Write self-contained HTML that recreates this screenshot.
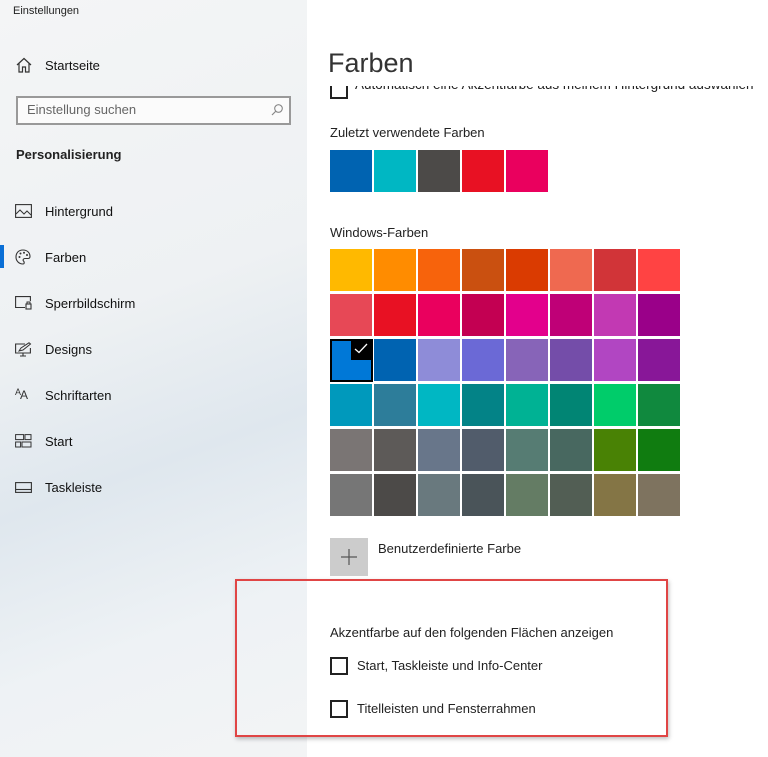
<!DOCTYPE html>
<html><head><meta charset="utf-8"><style>
*{margin:0;padding:0;box-sizing:border-box}
body{width:768px;height:757px;position:relative;overflow:hidden;background:#fff;font-family:"Liberation Sans",sans-serif;color:#000}
.side{position:absolute;left:0;top:0;width:307px;height:757px;background:linear-gradient(160deg,#f4f5f6 0%,#eef1f3 40%,#dfe7ee 60%,#eef2f5 80%,#f3f4f5 100%)}
.t{position:absolute;white-space:nowrap}
.nav{position:absolute;left:45px;font-size:13px;color:#111}
.ic{position:absolute;left:15px}
.sw{position:absolute;width:42px;height:42px}
.cb{position:absolute;width:18px;height:18px;border:2px solid #222;background:#fff}
</style></head><body>
<div class="side"></div>
<div class="t" style="left:13px;top:5px;font-size:11px;color:#222">Einstellungen</div>
<svg class="ic" style="top:57px" width="18" height="16" viewBox="0 0 18 16"><path d="M2 8 L9 1.5 L16 8 M4 6.5 V15 H7.5 V10 H10.5 V15 H14 V6.5" fill="none" stroke="#333" stroke-width="1.2"/></svg>
<div class="nav" style="top:58px">Startseite</div>
<div style="position:absolute;left:16px;top:96px;width:275px;height:29px;border:2px solid #999;background:#fbfbfb"></div>
<div class="t" style="left:27px;top:102px;font-size:13px;color:#666">Einstellung suchen</div>
<svg style="position:absolute;left:270px;top:103px" width="14" height="14" viewBox="0 0 14 14"><circle cx="8.5" cy="5.5" r="3.8" fill="none" stroke="#888" stroke-width="1.1"/><path d="M6 8 L2 12" stroke="#888" stroke-width="1.2"/></svg>
<div class="t" style="left:16px;top:147px;font-size:13px;font-weight:bold;color:#222">Personalisierung</div>
<svg class="ic" style="top:204px" width="17" height="14" viewBox="0 0 17 14"><rect x="0.6" y="0.6" width="15.8" height="12.8" fill="none" stroke="#333" stroke-width="1.1"/><path d="M1 10 L5 6 L9 10 L12 7 L16 11" fill="none" stroke="#333" stroke-width="1"/></svg>
<div class="nav" style="top:204px">Hintergrund</div>
<div style="position:absolute;left:0;top:245px;width:4px;height:23px;background:#0a6fd6"></div>
<svg class="ic" style="top:249px" width="16" height="16" viewBox="0 0 16 16"><path d="M8 1 C3 1 1 4.5 1 8 C1 12 4 15 8 15 C9.5 15 9.5 13 8.5 12 C7.5 11 8.5 9.5 10 9.5 H13 C14.5 9.5 15 8.5 15 7.5 C15 3.5 12 1 8 1Z" fill="none" stroke="#333" stroke-width="1.1"/><circle cx="4.5" cy="8" r="1" fill="#333"/><circle cx="5.5" cy="4.5" r="1" fill="#333"/><circle cx="9" cy="3.8" r="1" fill="#333"/><circle cx="12" cy="6" r="1" fill="#333"/></svg>
<div class="nav" style="top:250px">Farben</div>
<svg class="ic" style="top:296px" width="17" height="14" viewBox="0 0 17 14"><path d="M10 11.5 H0.6 V0.6 H15.4 V5" fill="none" stroke="#333" stroke-width="1.1"/><rect x="11" y="8" width="5" height="5" fill="none" stroke="#333" stroke-width="1.1"/><path d="M12 8 V6 H15 V8" fill="none" stroke="#333"/></svg>
<div class="nav" style="top:296px">Sperrbildschirm</div>
<svg class="ic" style="top:342px" width="17" height="15" viewBox="0 0 17 15"><path d="M10 2 H0.6 V11 H15.4 V6 M5 14 H11 M8 11 V14" fill="none" stroke="#333" stroke-width="1.1"/><path d="M4 9 L6 6 L14 0.8 L15.5 2 L8 8 Z" fill="none" stroke="#333"/></svg>
<div class="nav" style="top:342px">Designs</div>
<div class="t" style="left:15px;top:387px;font-size:12px;color:#333;letter-spacing:-1px"><span style="font-size:9px;vertical-align:4px">A</span>A</div>
<div class="nav" style="top:388px">Schriftarten</div>
<svg class="ic" style="top:434px" width="17" height="14" viewBox="0 0 17 14"><rect x="0.6" y="0.6" width="8" height="5" fill="none" stroke="#333"/><rect x="10" y="0.6" width="6" height="5" fill="none" stroke="#333"/><rect x="0.6" y="8" width="5" height="5" fill="none" stroke="#333"/><rect x="7" y="8" width="9" height="5" fill="none" stroke="#333"/></svg>
<div class="nav" style="top:434px">Start</div>
<svg class="ic" style="top:482px" width="17" height="11" viewBox="0 0 17 11"><rect x="0.6" y="0.6" width="15.8" height="9.8" fill="none" stroke="#333" stroke-width="1.1"/><path d="M1 7.5 H16" stroke="#333" stroke-width="1.1"/></svg>
<div class="nav" style="top:480px">Taskleiste</div>

<div class="t" style="left:328px;top:48px;font-size:27px;color:#333">Farben</div>
<div style="position:absolute;left:307px;top:86px;width:461px;height:13px;overflow:hidden">
 <div class="cb" style="left:23px;top:-4px;height:17px"></div>
 <div class="t" style="left:48px;top:-9px;font-size:13.5px;color:#222">Automatisch eine Akzentfarbe aus meinem Hintergrund auswählen</div>
</div>
<div class="t" style="left:330px;top:125px;font-size:13px;color:#222">Zuletzt verwendete Farben</div>
<div class="sw" style="left:330px;top:150px;background:#0063b1"></div>
<div class="sw" style="left:374px;top:150px;background:#00b7c3"></div>
<div class="sw" style="left:418px;top:150px;background:#4c4a48"></div>
<div class="sw" style="left:462px;top:150px;background:#e81123"></div>
<div class="sw" style="left:506px;top:150px;background:#ea005e"></div>
<div class="t" style="left:330px;top:225px;font-size:13px;color:#222">Windows-Farben</div>
<div id="g"></div>
<script>
var c=[["#ffb900","#ff8c00","#f7630c","#ca5010","#da3b01","#ef6950","#d13438","#ff4343"],
["#e74856","#e81123","#ea005e","#c30052","#e3008c","#bf0077","#c239b3","#9a0089"],
["#0078d7","#0063b1","#8e8cd8","#6b69d6","#8764b8","#744da9","#b146c2","#881798"],
["#0099bc","#2d7d9a","#00b7c3","#038387","#00b294","#018574","#00cc6a","#10893e"],
["#7a7574","#5d5a58","#68768a","#515c6b","#567c73","#486860","#498205","#107c10"],
["#767676","#4c4a48","#69797e","#4a5459","#647c64","#525e54","#847545","#7e735f"]];
var h="";
for(var r=0;r<6;r++)for(var i=0;i<8;i++)h+='<div class="sw" style="left:'+(330+i*44)+'px;top:'+(249+r*45)+'px;background:'+c[r][i]+'"></div>';
document.getElementById("g").outerHTML=h;
</script>
<div style="position:absolute;left:330px;top:339px;width:43px;height:43px;border:2px solid #000;background:#0078d7"></div>
<div style="position:absolute;left:351px;top:339px;width:22px;height:21px;background:#000"></div>
<svg style="position:absolute;left:354px;top:343px" width="14" height="11" viewBox="0 0 14 11"><path d="M1 6 L5 9.5 L13 1" fill="none" stroke="#fff" stroke-width="1.3"/></svg>
<div style="position:absolute;left:330px;top:538px;width:38px;height:38px;background:#ccc"></div>
<svg style="position:absolute;left:341px;top:549px" width="16" height="16" viewBox="0 0 16 16"><path d="M8 0 V16 M0 8 H16" stroke="#555" stroke-width="1.2"/></svg>
<div class="t" style="left:378px;top:541px;font-size:13px;color:#222">Benutzerdefinierte Farbe</div>
<div style="position:absolute;left:235px;top:579px;width:433px;height:158px;border:2.5px solid #e04545;box-shadow:1px 2px 4px rgba(0,0,0,.25)"></div>
<div class="t" style="left:330px;top:625px;font-size:13px;color:#222">Akzentfarbe auf den folgenden Flächen anzeigen</div>
<div class="cb" style="left:330px;top:657px"></div>
<div class="t" style="left:357px;top:658px;font-size:13px;color:#222">Start, Taskleiste und Info-Center</div>
<div class="cb" style="left:330px;top:700px"></div>
<div class="t" style="left:357px;top:701px;font-size:13px;color:#222">Titelleisten und Fensterrahmen</div>
</body></html>
